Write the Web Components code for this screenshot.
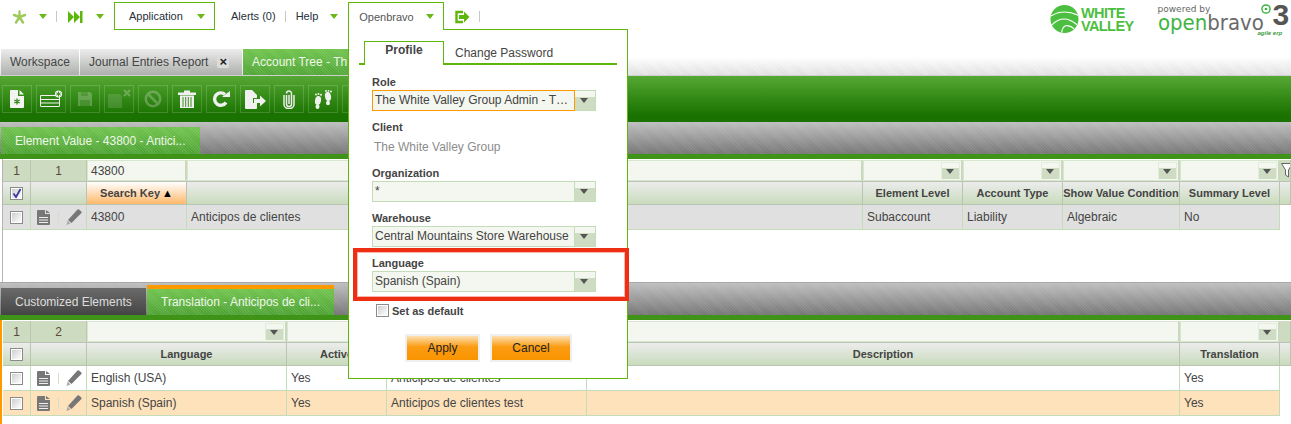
<!DOCTYPE html>
<html>
<head>
<meta charset="utf-8">
<title>Openbravo</title>
<style>
  html, body { margin: 0; padding: 0; background: #fff; }
  body { width: 1291px; height: 424px; overflow: hidden; position: relative;
         font-family: "Liberation Sans", Arial, sans-serif; font-size: 12px; color: #444; }
</style>
</head>
<body>

<ob-navbar>
  <ob-icon name="star" style="margin-left:12px"></ob-icon>
  <ob-caret style="margin-left:12px"></ob-caret>
  <ob-sep style="margin-left:9px"></ob-sep>
  <ob-icon name="forward" style="margin-left:11px"></ob-icon>
  <ob-caret style="margin-left:13px"></ob-caret>
  <ob-nav-item boxed style="margin-left:10px;width:101px;padding-left:14px">Application<ob-caret style="margin-left:14px"></ob-caret></ob-nav-item>
  <ob-nav-item style="margin-left:16px">Alerts (0)</ob-nav-item>
  <ob-sep style="margin-left:9px"></ob-sep>
  <ob-nav-item style="margin-left:10px">Help<ob-caret style="margin-left:12px"></ob-caret></ob-nav-item>
  <ob-nav-item open style="margin-left:10px;width:96px;padding-left:10px">Openbravo<ob-caret style="margin-left:12px"></ob-caret></ob-nav-item>
  <ob-icon name="exit" style="margin-left:11px"></ob-icon>
  <ob-sep style="margin-left:9px"></ob-sep>
  <ob-logos></ob-logos>
</ob-navbar>

<ob-tabstrip>
  <ob-tab style="width:78px;margin-left:1px">Workspace</ob-tab>
  <ob-tab closable style="width:162px;margin-left:1px">Journal Entries Report</ob-tab>
  <ob-tab active style="width:105px;margin-left:1px">Account Tree - Th</ob-tab>
</ob-tabstrip>

<ob-toolbar>
  <ob-tool name="newdoc"></ob-tool>
  <ob-tool name="newrow"></ob-tool>
  <ob-tool name="save" disabled></ob-tool>
  <ob-tool name="saveclose" disabled></ob-tool>
  <ob-tool name="cancel" disabled></ob-tool>
  <ob-tool name="trash"></ob-tool>
  <ob-tool name="refresh"></ob-tool>
  <ob-tool name="export"></ob-tool>
  <ob-tool name="clip"></ob-tool>
  <ob-tool name="feet"></ob-tool>
  <ob-tool name="clip"></ob-tool>
</ob-toolbar>

<ob-subtabs style="height:32px">
  <ob-subtab active style="width:199px;height:27px;margin-left:1px">Element Value - 43800 - Antici...</ob-subtab>
</ob-subtabs>

<ob-grid style="--cols:28px 56px 100px 676px 100px 100px 117px 100px 1fr;height:123px">
  <ob-row kind="filter">
    <ob-cell kind="num" center>1</ob-cell>
    <ob-cell kind="num" center>1</ob-cell>
    <ob-cell kind="input">43800</ob-cell>
    <ob-cell kind="input"></ob-cell>
    <ob-cell kind="input" drop></ob-cell>
    <ob-cell kind="input" drop></ob-cell>
    <ob-cell kind="input" drop></ob-cell>
    <ob-cell kind="input" drop></ob-cell>
    <ob-cell kind="num" style="padding-left:1px"><ob-icon name="funnel"></ob-icon></ob-cell>
  </ob-row>
  <ob-row kind="head">
    <ob-cell kind="head" center><ob-check checked></ob-check></ob-cell>
    <ob-cell kind="head"></ob-cell>
    <ob-cell kind="sorted" center>Search Key<span style="margin-left:2px;font-size:11px;color:#000">&#9650;</span></ob-cell>
    <ob-cell kind="head"></ob-cell>
    <ob-cell kind="head" center>Element Level</ob-cell>
    <ob-cell kind="head" center>Account Type</ob-cell>
    <ob-cell kind="head" center>Show Value Condition</ob-cell>
    <ob-cell kind="head" center>Summary Level</ob-cell>
    <ob-cell kind="head"></ob-cell>
  </ob-row>
  <ob-row kind="data" tone="gray">
    <ob-cell center><ob-check></ob-check></ob-cell>
    <ob-cell><ob-row-actions></ob-row-actions></ob-cell>
    <ob-cell>43800</ob-cell>
    <ob-cell>Anticipos de clientes</ob-cell>
    <ob-cell>Subaccount</ob-cell>
    <ob-cell>Liability</ob-cell>
    <ob-cell>Algebraic</ob-cell>
    <ob-cell>No</ob-cell>
  </ob-row>
</ob-grid>

<ob-subtabs style="height:32px;border-top:1px solid #a8a8a8">
  <ob-subtab dark style="width:145px;height:27px;margin-left:1px">Customized Elements</ob-subtab>
  <ob-subtab active marked style="width:187px;height:30px;margin-left:0">Translation - Anticipos de cli...</ob-subtab>
</ob-subtabs>

<ob-grid marked style="--cols:28px 56px 200px 100px 200px 593px 100px 1fr;height:104px">
  <ob-row kind="filter">
    <ob-cell kind="num" center>1</ob-cell>
    <ob-cell kind="num" center>2</ob-cell>
    <ob-cell kind="input" drop></ob-cell>
    <ob-cell kind="input"></ob-cell>
    <ob-cell kind="input"></ob-cell>
    <ob-cell kind="input"></ob-cell>
    <ob-cell kind="input" drop></ob-cell>
    <ob-cell kind="num"></ob-cell>
  </ob-row>
  <ob-row kind="head">
    <ob-cell kind="head" center><ob-check></ob-check></ob-cell>
    <ob-cell kind="head"></ob-cell>
    <ob-cell kind="head" center>Language</ob-cell>
    <ob-cell kind="head" center>Active</ob-cell>
    <ob-cell kind="head" center></ob-cell>
    <ob-cell kind="head" center>Description</ob-cell>
    <ob-cell kind="head" center>Translation</ob-cell>
    <ob-cell kind="head"></ob-cell>
  </ob-row>
  <ob-row kind="data">
    <ob-cell center><ob-check></ob-check></ob-cell>
    <ob-cell><ob-row-actions></ob-row-actions></ob-cell>
    <ob-cell>English (USA)</ob-cell>
    <ob-cell>Yes</ob-cell>
    <ob-cell>Anticipos de clientes</ob-cell>
    <ob-cell></ob-cell>
    <ob-cell>Yes</ob-cell>
  </ob-row>
  <ob-row kind="data" tone="selected">
    <ob-cell center><ob-check></ob-check></ob-cell>
    <ob-cell><ob-row-actions></ob-row-actions></ob-cell>
    <ob-cell>Spanish (Spain)</ob-cell>
    <ob-cell>Yes</ob-cell>
    <ob-cell>Anticipos de clientes test</ob-cell>
    <ob-cell></ob-cell>
    <ob-cell>Yes</ob-cell>
  </ob-row>
</ob-grid>

<ob-profile-popup>
  <ob-field label="Role"><ob-select focused>The White Valley Group Admin - T…</ob-select></ob-field>
  <ob-field label="Client" style="height:46px"><div style="padding:4px 2px 0;color:#8c8c8c;height:21px;box-sizing:border-box;line-height:16px">The White Valley Group</div></ob-field>
  <ob-field label="Organization"><ob-select>*</ob-select></ob-field>
  <ob-field label="Warehouse"><ob-select>Central Mountains Store Warehouse</ob-select></ob-field>
  <ob-field label="Language"><ob-select>Spanish (Spain)</ob-select></ob-field>
</ob-profile-popup>

<script>
// all the icons live here, keyed by name
const ICONS = {
  star: `<svg width="15" height="14" viewBox="0 0 15 14"><g stroke="#9ccb5a" stroke-width="2.400" stroke-linecap="round"><path d="M7.500 7V1.500M7.500 7 2 5M7.500 7 13 5M7.500 7 4 12.500M7.500 7 11 12.500"/></g></svg>`,
  forward: `<svg width="15" height="14" viewBox="0 0 15 14"><path fill="#5fb60a" d="M0 1l6 6-6 6zM6 1l6 6-6 6zM12 1h2.500v12H12z"/></svg>`,
  exit: `<svg width="15" height="14" viewBox="0 0 15 14"><path fill="none" stroke="#5fb60a" stroke-width="2.400" d="M8 2H1.500v10H8"/><path fill="#5fb60a" d="M4 5h5V1.500L14.500 7 9 12.500V9H4z"/></svg>`,
  funnel: `<svg width="12" height="17" viewBox="0 0 12 17"><path fill="#fff" stroke="#666" d="M.5 1.500h11L7.500 8v7l-3-2V8z"/></svg>`,
  newdoc: `<svg width="16" height="20" viewBox="0 0 16 20"><path fill="#f4f4f4" d="M1 2q0-1 1-1h7v6h6v11q0 1-1 1H2q-1 0-1-1z"/><path fill="#f4f4f4" d="M10.500 1 15 5.500h-4.500z"/><path stroke="#2f8a10" stroke-width="1.300" d="M8 9.500v6M5.300 11l5.400 3M10.700 11l-5.400 3"/></svg>`,
  newrow: `<svg width="26" height="18" viewBox="0 0 26 18"><path fill="none" stroke="#f2f2f2" d="M2.500 5.500h19v10.500q0 .5-.5.500H3q-.5 0-.5-.5zM2.500 9.500h19M2.500 13h19"/><circle cx="20.500" cy="4" r="3.600" fill="#f2f2f2"/><path stroke="#2f8a10" stroke-width=".9" d="M20.500 1.500v5M18.300 2.800l4.400 2.400M22.700 2.800l-4.400 2.400"/></svg>`,
  save: `<svg width="16" height="16" viewBox="0 0 16 16"><path fill="#e8e8e8" d="M1 1h12l2 2v12H1z"/><path fill="#3f8c25" d="M4 1h7v4H4zM3 9h10v6H3z" opacity=".5"/></svg>`,
  saveclose: `<svg width="24" height="20" viewBox="0 0 24 20"><path fill="#e8e8e8" d="M1 5h12l2 2v12H1z" opacity=".55"/><path stroke="#e8e8e8" stroke-width="2.400" d="M17 1l6 6M23 1l-6 6"/></svg>`,
  cancel: `<svg width="18" height="18" viewBox="0 0 18 18"><circle cx="9" cy="9" r="7.200" fill="none" stroke="#e8e8e8" stroke-width="2.600"/><path stroke="#e8e8e8" stroke-width="2.600" d="M4 4l10 10"/></svg>`,
  trash: `<svg width="18" height="18" viewBox="0 0 18 18"><path fill="#f0f0f0" d="M0 2.500h18V5H0zM6 .5h6v2H6zM2 5.500h14V18H2z"/><path stroke="#3f8c25" d="M5 7v10M7.700 7v10M10.300 7v10M13 7v10"/></svg>`,
  refresh: `<svg width="18" height="16" viewBox="0 0 18 16"><path fill="none" stroke="#f0f0f0" stroke-width="3.400" d="M14 11.500A6.200 6.200 0 1 1 13 3.500"/><path fill="#f0f0f0" d="M10 6h8V0z"/></svg>`,
  export: `<svg width="21" height="19" viewBox="0 0 21 19"><path fill="#f0f0f0" d="M0 1q0-1 1-1h6l5 5v3H8v5h4v5q0 1-1 1H1q-1 0-1-1z"/><path fill="#f0f0f0" d="M9 9h6V5.500l6 5.500-6 5.500V13H9z"/></svg>`,
  clip: `<svg width="12" height="19" viewBox="0 0 12 19"><path fill="none" stroke="#ededed" stroke-width="1.500" d="M3.500 5v9a2.500 2.500 0 0 0 5 0V3.500a2.500 2.500 0 0 0-5 0"/><path fill="none" stroke="#ededed" stroke-width="1.500" d="M1 5v9.500a5 4 0 0 0 10 0V5M6 5v9"/></svg>`,
  feet: `<svg width="21" height="19" viewBox="0 0 21 19"><g fill="#f0f0f0"><ellipse cx="5" cy="10.500" rx="3" ry="4.500" transform="rotate(10 5 10.500)"/><ellipse cx="4.500" cy="16.800" rx="2" ry="2.200"/><ellipse cx="15" cy="6.500" rx="3" ry="4.500" transform="rotate(-10 15 6.500)"/><ellipse cx="15" cy="13" rx="2" ry="2.200"/><circle cx="3" cy="4.500" r="1"/><circle cx="5.500" cy="4" r="1"/><circle cx="8" cy="4.800" r="1"/><circle cx="13" cy="1" r="1"/><circle cx="15.500" cy=".9" r=".9"/><circle cx="18" cy="1.500" r="1"/></g></svg>`
};

class ObElement extends HTMLElement {
  static get styles() { return ""; }
  static get markup() { return "<slot></slot>"; }

  constructor() {
    super();
    const template = document.createElement("template");
    template.innerHTML = `<style>${this.constructor.styles}</style>` + this.constructor.markup;
    this.attachShadow({ mode: "open" });
    this.shadowRoot.appendChild(template.content.cloneNode(true));
  }
}

class ObNavbar extends ObElement {
  static get styles() {
    return `:host { display: flex; align-items: flex-start; height: 49px; position: relative; z-index: 3; padding-top: 2px; box-sizing: border-box; }
            ::slotted(ob-icon) { margin-top: 8px; }
            ::slotted(ob-caret) { margin-top: 12px; }
            ::slotted(ob-sep) { margin-top: 9px; }`;
  }
}

class ObIcon extends HTMLElement {
  connectedCallback() {
    if (this.shadowRoot) return;
    this.attachShadow({ mode: "open" });
    this.shadowRoot.innerHTML = `<style>:host { display: inline-flex; flex: none; } svg { display: block; }</style>` + (ICONS[this.getAttribute("name")] || "");
  }
}

class ObCaret extends ObElement {
  static get styles() {
    return `:host { display: inline-block; flex: none; width: 0; height: 0; border-left: 4.5px solid transparent; border-right: 4.5px solid transparent; border-top: 5px solid #6cb81c; }`;
  }
  static get markup() { return ""; }
}

class ObSep extends ObElement {
  static get styles() { return `:host { display: block; flex: none; width: 1px; height: 11px; background: #c8c8c8; }`; }
  static get markup() { return ""; }
}

class ObNavItem extends ObElement {
  static get styles() {
    return `:host { display: flex; flex: none; align-items: center; box-sizing: border-box; height: 28px; font-size: 11px; color: #25303a; white-space: nowrap; }
            :host([boxed]) { border: 1px solid #5fb60a; }
            :host([open]) { border: 1px solid #5fb60a; border-bottom: 0; height: 28px; background: #fff; color: #555; }`;
  }
}

class ObLogos extends ObElement {
  static get styles() {
    return `:host { display: flex; margin-left: auto; position: relative; width: 241px; height: 40px; margin-top: 2px; }
            .wv { display: flex; gap: 2px; }
            .wv svg { display: block; }
            .wv div { font: bold 14.5px/13px "Liberation Sans", sans-serif; color: #4cbf40; padding-top: 3px; letter-spacing: -.6px; }
            .ob { margin-left: 24px; position: relative; width: 132px; }
            .pw { position: absolute; left: 0; top: 1px; font: 9px/9px "DejaVu Sans", sans-serif; color: #666; }
            .name { position: absolute; left: 0; top: 10px; font: 21px/18px "DejaVu Sans", sans-serif; white-space: nowrap; transform: scaleX(.94); transform-origin: left; }
            .name b { font-weight: normal; color: #3fb445; }
            .name i { font-style: normal; color: #6a6a6a; }
            .three { position: absolute; left: 115px; top: -5px; font: bold 30px/32px "Liberation Sans", sans-serif; color: #555; }
            .agile { position: absolute; left: 100px; top: 26px; font: italic bold 6px/6px "Liberation Sans", sans-serif; color: #3f9c45; }
            .spiral { position: absolute; left: 103px; top: 0; }`;
  }
  static get markup() {
    return `<div class="wv">
        <svg width="29" height="30" viewBox="0 0 30 30"><circle cx="15" cy="15" r="14.500" fill="#4cbf40"/><path fill="none" stroke="#fff" stroke-width="1.200" d="M1 12Q13 4 29 11M2 21Q14 9 28 21M12 29Q14 17 25 25"/></svg>
        <div>WHITE<br>VALLEY</div>
      </div>
      <div class="ob">
        <span class="pw">powered by</span>
        <span class="name"><b>open</b><i>bravo</i></span>
        <svg class="spiral" width="10" height="10" viewBox="0 0 11 11"><circle cx="5.500" cy="5.500" r="4.500" fill="none" stroke="#3fb445" stroke-width="1.600"/><circle cx="5.500" cy="5.500" r="1.500" fill="#3fb445"/></svg>
        <span class="three">3</span>
        <span class="agile">agile erp</span>
      </div>`;
  }
}

class ObTabstrip extends ObElement {
  static get styles() {
    return `:host { display: flex; align-items: stretch; height: 27px; box-sizing: border-box; border-bottom: 1px solid #cfcfcf;
              background: repeating-linear-gradient(45deg, rgba(255,255,255,.35) 0 1px, transparent 1px 2px),
                          linear-gradient(#fff 0, #fff 8px, #dcdcdc 100%); }`;
  }
}

class ObTab extends ObElement {
  static get styles() {
    return `:host { display: flex; align-items: center; flex: none; box-sizing: border-box; padding-left: 9px; color: #444; white-space: nowrap; overflow: hidden;
              background: linear-gradient(#ececec, #adb0ac); }
            :host([active]) { color: #eef7ea;
              background: repeating-linear-gradient(45deg, rgba(255,255,255,.1) 0 1px, transparent 1px 2px), linear-gradient(#6fc34c, #4fa634); }
            .x { display: none; width: 12px; height: 12px; margin-left: 9px; border-radius: 2px; background: #dcdcdc; color: #222; font: bold 13px/12px "Liberation Sans", sans-serif; text-align: center; }
            :host([closable]) .x { display: block; }`;
  }
  static get markup() { return `<slot></slot><span class="x">&#215;</span>`; }
}

class ObToolbar extends ObElement {
  static get styles() {
    return `:host { display: flex; gap: 4px; height: 46px; box-sizing: border-box; padding: 9px 0 0 2px;
              background: linear-gradient(#55a833 0, #1a7200 85%, #1a7200 100%); }`;
  }
}

class ObTool extends HTMLElement {
  connectedCallback() {
    if (this.shadowRoot) return;
    this.attachShadow({ mode: "open" });
    this.shadowRoot.innerHTML = `<style>
        :host { display: flex; flex: none; align-items: center; justify-content: center; width: 30px; height: 28px; box-sizing: border-box; border: 1px solid rgba(255,255,255,.16); }
        :host([disabled]) svg { opacity: .28; }
      </style>` + (ICONS[this.getAttribute("name")] || "");
  }
}

class ObSubtabs extends ObElement {
  static get styles() {
    return `:host { display: flex; align-items: flex-end; gap: 1px; position: relative; border-bottom: 5px solid #3f9418;
              background: repeating-linear-gradient(45deg, rgba(255,255,255,.08) 0 1px, transparent 1px 2px), linear-gradient(#bebebe, #757575); }`;
  }
}

class ObSubtab extends ObElement {
  static get styles() {
    return `:host { display: flex; align-items: center; flex: none; box-sizing: border-box; padding-left: 14px; color: #eef7ea; white-space: nowrap;
              background: repeating-linear-gradient(45deg, rgba(255,255,255,.1) 0 1px, transparent 1px 2px), linear-gradient(#6fc34c, #4ca232); }
            :host([dark]) { color: #dedede; background: linear-gradient(#6a6a6a, #454545); }
            :host([marked]) { border-top: 4px solid #f90; }`;
  }
}

class ObGrid extends ObElement {
  static get styles() {
    return `:host { display: block; box-sizing: border-box; padding-top: 1px; border-left: 1px solid #b5b5b5; margin-left: 2px; }
            :host([marked]) { border-left: 2px solid #f90; margin-left: 0; padding-left: 1px; }`;
  }
}

class ObRow extends ObElement {
  static get styles() {
    return `:host { display: grid; grid-template-columns: var(--cols); box-sizing: border-box; height: 22px; }
            :host([kind=head]) { height: 23px; background: linear-gradient(#ececec, #c9dbbc); border-bottom: 1px solid #b9c4b2; }
            :host([kind=filter]) { background: #cddcc0; height: 22px; border-bottom: 1px solid #b9c4b2; }
            :host([kind=data]) { height: 25px; width: 1277px; border-bottom: 1px solid #c4dcb8; }
            :host([tone=gray]) { background: #e0e0e0; }
            :host([tone=selected]) { background: #fde2bb; }`;
  }
}

class ObCell extends ObElement {
  static get styles() {
    return `:host { display: flex; align-items: center; box-sizing: border-box; min-width: 0; padding-left: 4px; border-right: 1px solid #c4dcb8; white-space: nowrap; overflow: hidden; color: #444; }
            :host([center]) { justify-content: center; padding-left: 0; }
            :host([kind=num]) { color: #5a4a3a; border-right: 1px solid #b9c9ae; }
            :host([kind=head]) { font-weight: bold; font-size: 11px; color: #444; border-right: 1px solid #b9c4b2; }
            :host([kind=sorted]) { font-weight: bold; font-size: 11px; color: #444; background: linear-gradient(#fff, #fdb96c); border-right: 1px solid #b9c4b2; }
            :host([kind=input]) { background: #f4f7ef; border: 1px solid #d9e6cf; border-right: 2px solid #cbd8c0; color: #444; position: relative; padding-left: 3px; }
            .drop { display: none; position: absolute; right: 1px; top: 1px; bottom: 1px; width: 17px; border: 1px solid #e4ecdc; border-bottom: 0; background: linear-gradient(#f4f7ef 30%, #cfdcc4 30%); }
            .drop::after { content: ""; position: absolute; left: 4px; top: 6px; border-left: 4.5px solid transparent; border-right: 4.5px solid transparent; border-top: 5px solid #555; }
            :host([drop]) .drop { display: block; }`;
  }
  static get markup() { return `<slot></slot><span class="drop"></span>`; }
}

class ObCheck extends ObElement {
  static get styles() {
    return `:host { display: block; flex: none; width: 13px; height: 13px; box-sizing: border-box; border: 1px solid #8a8a8a; background: linear-gradient(135deg, #c9c9c9, #f8f8f8 80%); box-shadow: inset 0 0 0 1px #fff; position: relative; }
            svg { display: none; position: absolute; left: 1px; top: 0; }
            :host([checked]) svg { display: block; }`;
  }
  static get markup() {
    return `<svg width="10" height="11" viewBox="0 0 10 11"><path fill="none" stroke="#3a3aa0" stroke-width="1.800" d="M1.500 5.500 4 9 8.500 1"/></svg>`;
  }
}

class ObRowActions extends ObElement {
  static get styles() {
    return `:host { display: flex; align-items: center; padding-left: 2px; color: #777; }
            svg { display: block; flex: none; }
            i { width: 1px; height: 11px; background: #cfe0c4; margin: 0 7px 0 8px; flex: none; }`;
  }
  static get markup() {
    return `<svg width="13" height="15" viewBox="0 0 13 15"><path fill="#777" d="M0 1q0-1 1-1h7v4h5v10q0 1-1 1H1q-1 0-1-1z"/><path fill="#777" d="M9 0l4 3H9z"/><path stroke="#eee" d="M2 7.500h9M2 10h9M2 12.500h9"/></svg>
      <i></i>
      <svg width="16" height="16" viewBox="0 0 16 16"><path fill="#777" d="M11.500.5q.8-.5 1.500.1l2.300 2q.7.7.1 1.500L5.500 14 2 11z"/><path fill="#aaa" d="M1.500 11.500l3 3-4 1.500z"/></svg>`;
  }
}

class ObProfilePopup extends ObElement {
  static get styles() {
    return `:host { display: block; position: absolute; left: 348px; top: 29px; width: 280px; height: 350px; box-sizing: border-box; border: 1px solid #5fb60a; background: #fff; z-index: 2; }
            .tabs { display: flex; align-items: flex-end; margin: 11px 10px 0 10px; height: 22px; border-bottom: 2px solid #5fb60a; }
            .tab { box-sizing: border-box; margin-left: 5px; width: 80px; height: 24px; margin-bottom: -2px; border: 1px solid #5fb60a; border-bottom: 0; background: #fff; font-weight: bold; color: #444; text-align: center; line-height: 16px; }
            .other { margin-left: 11px; color: #444; line-height: 24px; height: 22px; }
            .form { padding: 10px 0 0 23px; }
            .default { display: flex; align-items: center; gap: 3px; margin: 3px 0 0 4px; height: 13px; font: bold 11px "Liberation Sans", sans-serif; color: #444; }
            .buttons { display: flex; gap: 10px; margin: 17px 0 0 33px; }
            .btn { box-sizing: border-box; height: 28px; border: 2px solid #efefef; background: linear-gradient(#fde0b2 0, #fb9c12 45%, #f99400 100%); color: #222; display: flex; align-items: center; justify-content: center; }
            .alert { position: absolute; left: 4px; top: 218px; width: 276px; height: 53px; box-sizing: border-box; border: 4px solid #ee2f14; outline: 1px solid #f8b5a8; outline-offset: -5px; pointer-events: none; }`;
  }
  static get markup() {
    return `<div class="tabs"><div class="tab">Profile</div><div class="other">Change Password</div></div>
      <div class="form"><slot></slot>
        <div class="default"><ob-check></ob-check>Set as default</div>
        <div class="buttons"><div class="btn" style="width:75px">Apply</div><div class="btn" style="width:82px">Cancel</div></div>
      </div>
      <div class="alert"></div>`;
  }
}

class ObField extends ObElement {
  static get styles() {
    return `:host { display: block; height: 45px; box-sizing: border-box; }
            label { display: block; height: 15px; font: bold 11px/15px "Liberation Sans", sans-serif; color: #444; }`;
  }
  static get markup() { return `<label></label><slot></slot>`; }
  connectedCallback() {
    this.shadowRoot.querySelector("label").textContent = this.getAttribute("label");
  }
}

class ObSelect extends ObElement {
  static get styles() {
    return `:host { display: flex; width: 224px; height: 21px; box-sizing: border-box; }
            .val { flex: 1; min-width: 0; box-sizing: border-box; border: 1px solid #c4dcb8; background: #f4f7ef; padding-left: 2px; line-height: 19px; color: #444; white-space: nowrap; overflow: hidden; }
            :host([focused]) .val { border-color: #f90; }
            .btn { width: 21px; box-sizing: border-box; border: 1px solid #c4dcb8; border-left: 0; position: relative; background: linear-gradient(#f4f7ef 32%, #cfdcc4 32%); }
            .btn::after { content: ""; position: absolute; left: 5px; top: 7px; border-left: 4.5px solid transparent; border-right: 4.5px solid transparent; border-top: 5px solid #555; }`;
  }
  static get markup() { return `<div class="val"><slot></slot></div><div class="btn"></div>`; }
}

customElements.define("ob-navbar", ObNavbar);
customElements.define("ob-icon", ObIcon);
customElements.define("ob-caret", ObCaret);
customElements.define("ob-sep", ObSep);
customElements.define("ob-nav-item", ObNavItem);
customElements.define("ob-logos", ObLogos);
customElements.define("ob-tabstrip", ObTabstrip);
customElements.define("ob-tab", ObTab);
customElements.define("ob-toolbar", ObToolbar);
customElements.define("ob-tool", ObTool);
customElements.define("ob-subtabs", ObSubtabs);
customElements.define("ob-subtab", ObSubtab);
customElements.define("ob-grid", ObGrid);
customElements.define("ob-row", ObRow);
customElements.define("ob-cell", ObCell);
customElements.define("ob-check", ObCheck);
customElements.define("ob-row-actions", ObRowActions);
customElements.define("ob-profile-popup", ObProfilePopup);
customElements.define("ob-field", ObField);
customElements.define("ob-select", ObSelect);
</script>
</body>
</html>
